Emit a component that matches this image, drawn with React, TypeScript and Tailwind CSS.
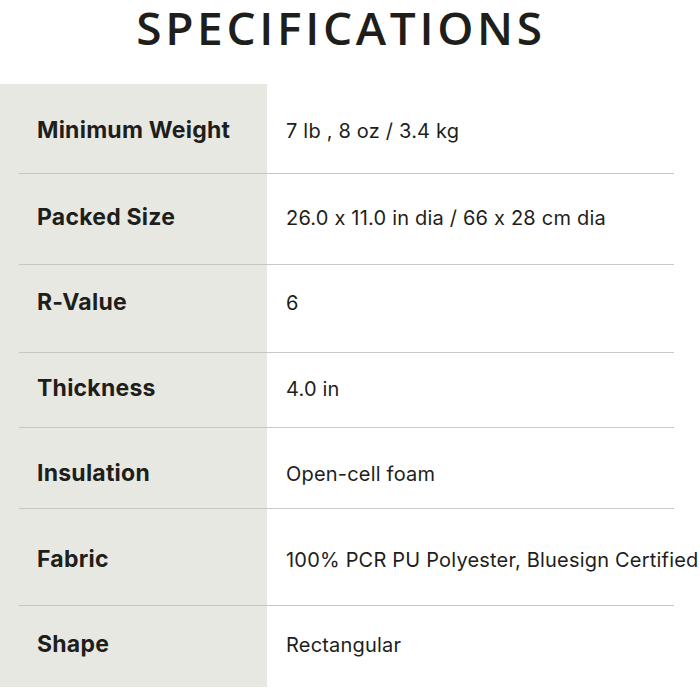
import React from "react";

const rows: { label: string; value: string; h: number; pt: number; line: boolean }[] = [
  { label: "Minimum Weight", value: "7 lb , 8 oz / 3.4 kg", h: 89, pt: 32, line: false },
  { label: "Packed Size", value: "26.0 x 11.0 in dia / 66 x 28 cm dia", h: 91, pt: 29, line: true },
  { label: "R-Value", value: "6", h: 88, pt: 23, line: true },
  { label: "Thickness", value: "4.0 in", h: 75, pt: 21, line: true },
  { label: "Insulation", value: "Open-cell foam", h: 81, pt: 31, line: true },
  { label: "Fabric", value: "100% PCR PU Polyester, Bluesign Certified", h: 97, pt: 36, line: true },
  { label: "Shape", value: "Rectangular", h: 82, pt: 24, line: true },
];

export default function App() {
  return (
    <div
      className="w-[700px] h-[700px] bg-white overflow-hidden"
      style={{ fontFamily: "Inter, 'Noto Sans', sans-serif", fontFeatureSettings: "'calt' 0" }}
    >
      <div className="h-[84px] flex justify-center pr-[18px]">
        <h1
          className="text-[46px] leading-[54px] font-semibold tracking-[0.08em] text-[#1e1e1b] whitespace-nowrap"
          style={{ fontFamily: "'Open Sans', sans-serif" }}
        >
          SPECIFICATIONS
        </h1>
      </div>
      <div className="flex flex-col">
        {rows.map((r) => (
          <div key={r.label} className="flex" style={{ height: r.h }}>
            <div className="w-[267px] shrink-0 bg-[#e8e8e3] pl-[19px]">
              <div
                className={`h-full pl-[18px] ${r.line ? "border-t border-[#c6c6c2]" : ""}`}
                style={{ paddingTop: r.pt }}
              >
                <span className="text-[23px] leading-[28px] font-bold tracking-[0.01em] text-[#1e1e1b] whitespace-nowrap">
                  {r.label}
                </span>
              </div>
            </div>
            <div className="flex-1 mr-[26px] min-w-0">
              <div
                className={`h-full pl-[19px] ${r.line ? "border-t border-[#c9c9c9]" : ""}`}
                style={{ paddingTop: r.pt + 1 }}
              >
                <span className="text-[20px] leading-[28px] font-normal tracking-[0.01em] text-[#1e1e1b] whitespace-nowrap">
                  {r.value}
                </span>
              </div>
            </div>
          </div>
        ))}
      </div>
    </div>
  );
}
